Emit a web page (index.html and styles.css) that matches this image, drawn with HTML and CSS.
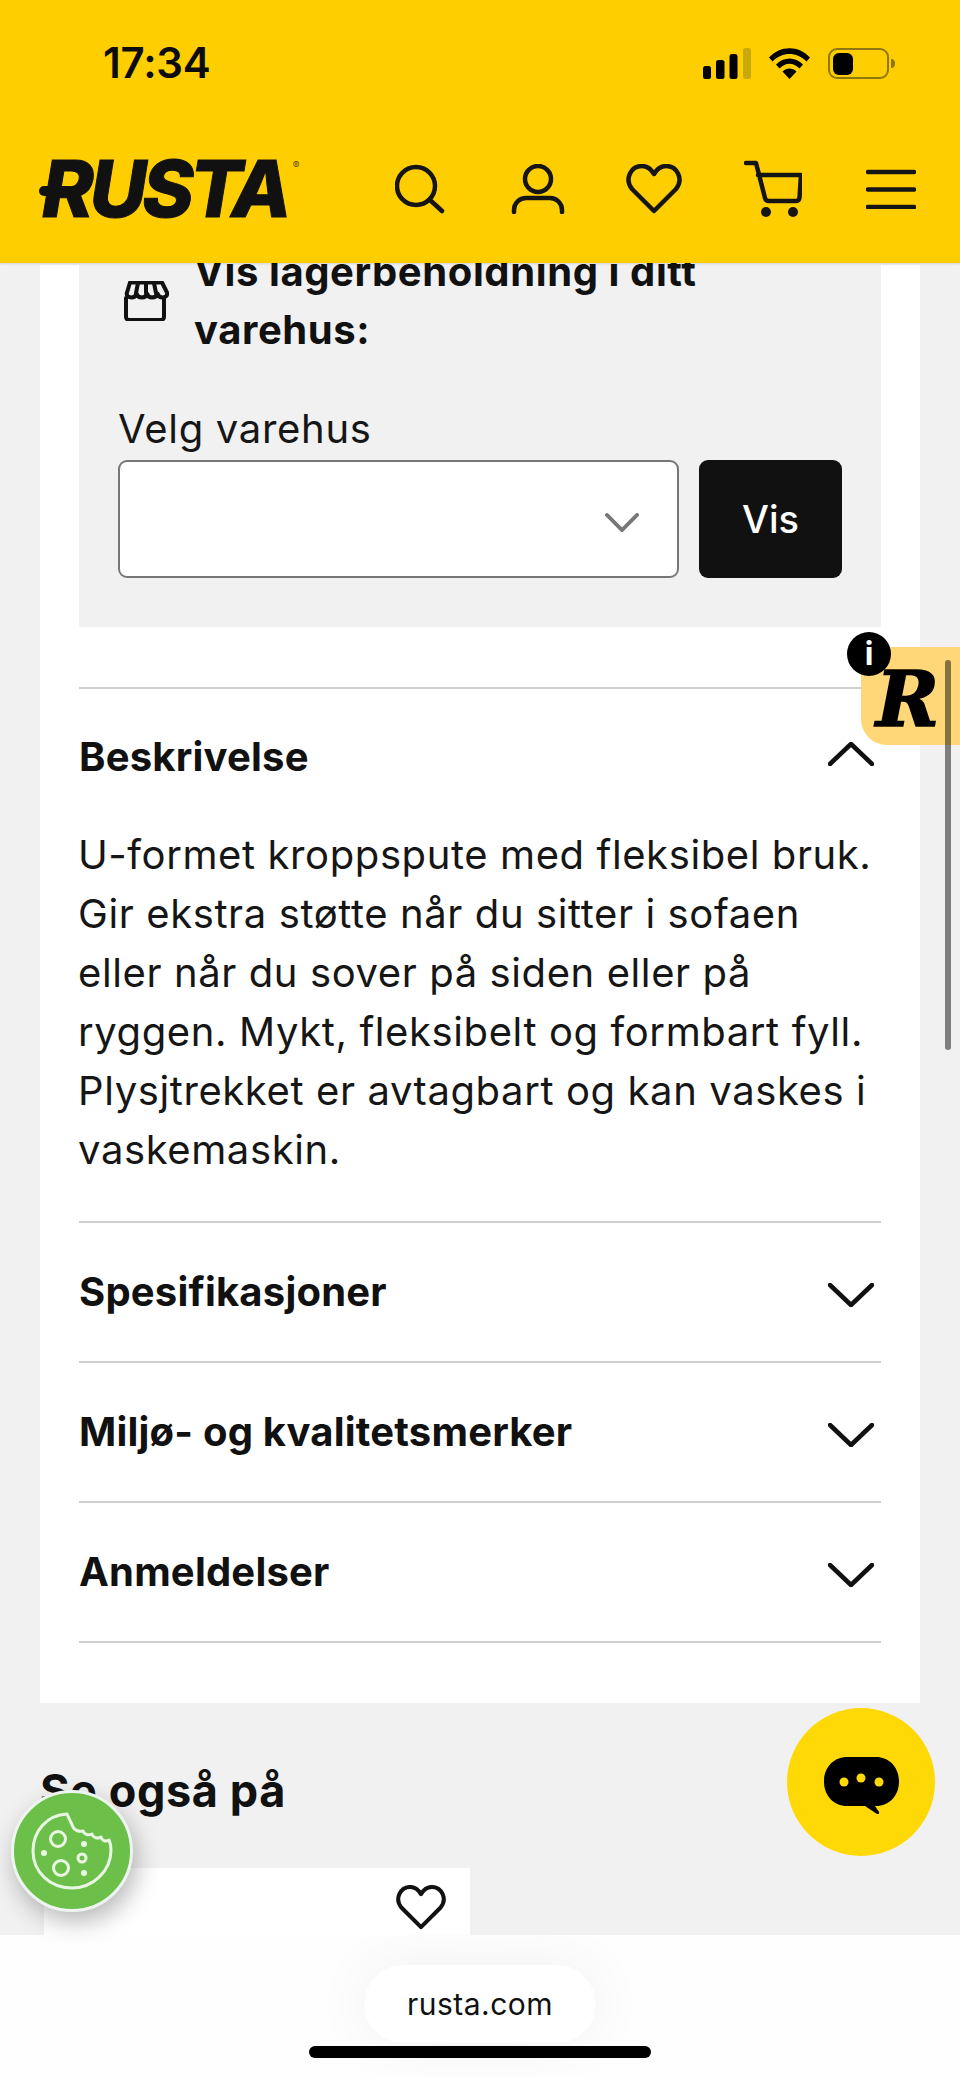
FILE: index.html
```html
<!DOCTYPE html>
<html lang="no">
<head>
<meta charset="utf-8">
<title>Rusta</title>
<link rel="stylesheet" href="styles.css">
</head>
<body>
<div class="page">
  <header class="header">
    <div class="status">
      <span class="time">17:34</span>
      <div class="status-icons">
        <svg class="sig" viewBox="0 0 48 31"><rect x="0" y="18" width="8" height="13" rx="2.5"/><rect x="13" y="12" width="8.5" height="19" rx="2.5"/><rect x="26.5" y="6" width="8" height="25" rx="2.5"/><rect class="dim" x="40" y="0" width="8" height="31" rx="2.5"/></svg>
        <svg class="wifi" viewBox="0 0 41 31"><path d="M0 9.5C11-3 30-3 41 9.5L37.5 13.500C28 3.500 13 3.500 3.500 13.500Z"/><path d="M7 16.500C14.500 8.500 26.500 8.500 34 16.500L30.500 20.500C24.500 14 16.500 14 10.500 20.500Z"/><path d="M13.500 23.500C17.500 19.500 23.500 19.500 27.500 23.500L20.500 31Z"/></svg>
        <svg class="batt" viewBox="0 0 67 31"><rect class="batt-frame" x="1" y="1" width="59" height="29" rx="8"/><rect x="5" y="5" width="20" height="22" rx="6"/><path class="batt-nub" d="M63 11c3 0 4 2 4 4.500s-1 4.500-4 4.500z"/></svg>
      </div>
    </div>
    <div class="nav">
      <a class="logo"><span class="logo-text">RUSTA</span><span class="logo-bar"></span><span class="reg">®</span></a>
      <div class="nav-icons">
        <svg class="ico i-search" viewBox="0 0 50 50"><circle cx="21" cy="22" r="19"/><path d="M35 36l12 11"/></svg>
        <svg class="ico i-user" viewBox="0 0 54 50"><circle cx="27" cy="15" r="13"/><path d="M3 48v-2a12 12 0 0 1 12-12h24a12 12 0 0 1 12 12v2"/></svg>
        <svg class="ico i-heart" viewBox="0 0 56 50"><path d="M28 47L6 25C-2 15 5 2 16 2c5 0 9 3 12 8 3-5 7-8 12-8 11 0 18 13 10 23z"/></svg>
        <svg class="ico i-cart" viewBox="0 0 58 58"><path d="M2 3h10l9 35c.5 2 2 3 4 3h27c2 0 3-1 3.500-3L57 15H14"/><circle class="fill" cx="22" cy="52" r="5"/><circle class="fill" cx="49" cy="52" r="5"/></svg>
        <svg class="ico i-menu" viewBox="0 0 50 40"><path d="M2 3h46M2 20.500h46M2 38h46"/></svg>
      </div>
    </div>
  </header>

  <main class="main">
    <section class="card">
      <div class="stock">
        <div class="stock-head">
          <svg class="store" viewBox="0 0 46 40"><path d="M3 17v19a3 3 0 0 0 3 3h32a3 3 0 0 0 3-3V17"/><path d="M7 1.500h32l5 10c.8 3-1.500 5-4.500 5-3 0-4.500-2-5-4-.5 2-2 4-5.500 4s-4.500-2-5-4c-.5 2-2 4-5 4s-5-2-5.500-4c-.5 2-2 4-5 4s-5.500-2-4.500-5z"/><path d="M15 2l-2 10M23 2v10M31 2l2 10"/></svg>
          <h2 class="stock-title">Vis lagerbeholdning i ditt varehus:</h2>
        </div>
        <label class="field-label">Velg varehus</label>
        <div class="field-row">
          <div class="select"><svg class="sel-chev" viewBox="0 0 36 20"><path d="M2 2l16 16L34 2"/></svg></div>
          <button class="btn">Vis</button>
        </div>
      </div>

      <div class="acc">
        <div class="acc-row acc-open"><h3 class="acc-title">Beskrivelse</h3><svg class="chev" viewBox="0 0 46 24"><path d="M2 22L23 2l21 20"/></svg></div>
        <p class="acc-body">U-formet kroppspute med fleksibel bruk.<br>Gir ekstra støtte når du sitter i sofaen<br>eller når du sover på siden eller på<br>ryggen. Mykt, fleksibelt og formbart fyll.<br>Plysjtrekket er avtagbart og kan vaskes i<br>vaskemaskin.</p>
        <div class="acc-row"><h3 class="acc-title">Spesifikasjoner</h3><svg class="chev" viewBox="0 0 46 24"><path d="M2 2l21 20L44 2"/></svg></div>
        <div class="acc-row"><h3 class="acc-title">Miljø- og kvalitetsmerker</h3><svg class="chev" viewBox="0 0 46 24"><path d="M2 2l21 20L44 2"/></svg></div>
        <div class="acc-row acc-last"><h3 class="acc-title">Anmeldelser</h3><svg class="chev" viewBox="0 0 46 24"><path d="M2 2l21 20L44 2"/></svg></div>
      </div>
    </section>

    <h2 class="also">Se også på</h2>
    <div class="product">
      <svg class="p-heart" viewBox="0 0 56 50"><path d="M28 47L6 25C-2 15 5 2 16 2c5 0 9 3 12 8 3-5 7-8 12-8 11 0 18 13 10 23z"/></svg>
    </div>
  </main>

  <footer class="bottom">
    <div class="pill">rusta.com</div>
    <div class="home"></div>
  </footer>

  <div class="r-badge"><span class="r-letter">R</span></div>
  <div class="i-badge">i</div>
  <div class="scroll"></div>

  <div class="chat">
    <svg class="chat-ico" viewBox="0 0 75 57"><path d="M23 0h29c13 0 23 10 23 24.500S65 49 52 49h-1l4 6c.5 1.500-.5 2.500-2 2L41 49H23C10 49 0 39 0 24.500S10 0 23 0z"/><circle class="dot" cx="20" cy="25" r="4.500"/><circle class="dot" cx="37" cy="21" r="4.500"/><circle class="dot" cx="55" cy="25" r="4.500"/></svg>
  </div>

  <div class="cookie">
    <svg class="cookie-ico" viewBox="0 0 82 78"><path d="M36 2c-20 1-34 17-34 37 0 21 17 37 39 37 21 0 39-17 39-38 0-4-.5-7-2-10-3 2-7 1-8-3-3 2-8 1-9-3-4 2-8 0-9-3-4 1-9-1-10-4-1-3-3-6-6-13z"/><circle cx="27" cy="27" r="7.500"/><circle cx="30" cy="56" r="7.500"/><circle cx="51" cy="46" r="4"/><circle class="cdot" cx="53" cy="32" r="3"/><circle class="cdot" cx="13" cy="41" r="3"/><circle class="cdot" cx="53" cy="61" r="3"/></svg>
  </div>
</div>
</body>
</html>
```
FILE: styles.css
```css
* { box-sizing: border-box; }
html, body { margin: 0; padding: 0; }
body { font-family: Inter, "Noto Sans", sans-serif; color: #111; background: #f1f1f1; }
.page { position: relative; width: 960px; height: 2078px; overflow: hidden; display: flex; flex-direction: column; }

/* header */
.header { height: 263px; background: #ffce00; flex: none; position: relative; z-index: 2; box-shadow: 0 1px 2px rgba(0,0,0,.12); }
.status { display: flex; justify-content: space-between; align-items: center; height: 102px; padding: 24px 65px 0 103px; }
.time { font-size: 42px; font-weight: 600; line-height: 48px; color: #0c0c0c; letter-spacing: -.2px; }
.status-icons { display: flex; align-items: center; gap: 18px; }
.sig { width: 48px; height: 31px; fill: #000; }
.sig .dim { fill: #c9a80a; }
.wifi { width: 41px; height: 31px; fill: #000; }
.batt { width: 67px; height: 31px; fill: #000; }
.batt-frame { fill: none; stroke: #8f7610; stroke-width: 2; }
.batt-nub { fill: #8f7610; }
.nav { display: flex; align-items: center; justify-content: space-between; padding: 49px 44px 0 40px; }
.logo { position: relative; display: flex; align-items: flex-start; height: 76px; color: #111; }
.logo-text { font-size: 78px; line-height: 76px; font-weight: 800; font-style: italic; letter-spacing: -4px; -webkit-text-stroke: 1px #111; margin-left: 2px; }
.logo-bar { position: absolute; left: -1px; top: 35px; width: 34px; height: 10px; border-radius: 5px; background: #111; }
.reg { font-size: 10px; line-height: 12px; margin-left: 5px; margin-top: 8px; color: #5b4a00; }
.nav-icons { display: flex; align-items: center; gap: 61px; }
.ico { fill: none; stroke: #151515; stroke-width: 4.500; stroke-linecap: round; stroke-linejoin: round; display: block; }
.ico .fill { fill: #151515; stroke: none; }
.i-search { width: 50px; height: 50px; margin-right: 5px; }
.i-user { width: 54px; height: 50px; }
.i-heart { width: 56px; height: 50px; margin-right: 1px; }
.i-cart { width: 58px; height: 58px; margin-right: 3px; }
.i-menu { width: 50px; height: 40px; }

/* main */
.main { flex: 1; min-height: 0; overflow: hidden; padding: 2px 40px 0; }
.card { background: #fff; padding: 0 39px 60px 39px; }
.stock { display: flow-root; background: #f1f1f1; height: 362px; padding: 0 38px 0 40px; }
.stock-head { display: flex; align-items: center; gap: 25px; margin-top: -22px; padding-left: 4px; }
.store { width: 46px; height: 40px; flex: none; fill: none; stroke: #111; stroke-width: 4; stroke-linejoin: round; stroke-linecap: round; }
.stock-title { margin: 0; width: 560px; font-size: 40px; line-height: 58px; font-weight: 700; letter-spacing: .6px; }
.field-label { display: block; margin-top: 46px; margin-left: -1px; font-size: 40px; line-height: 48px; font-weight: 400; color: #161616; letter-spacing: .7px; }
.field-row { display: flex; gap: 20px; margin-top: 7px; margin-left: -1px; }
.select { width: 561px; height: 118px; background: #fff; border: 2.500px solid #777; border-radius: 9px; display: flex; align-items: center; justify-content: flex-end; padding: 6px 38px 0 0; }
.sel-chev { width: 34px; height: 19px; fill: none; stroke: #777; stroke-width: 4; stroke-linecap: round; stroke-linejoin: round; }
.btn { width: 143px; height: 118px; border: 0; border-radius: 9px; background: #111; color: #fff; font: 500 38px Inter, sans-serif; }

/* accordion */
.acc { margin-top: 60px; }
.acc-row { height: 140px; border-top: 2px solid #cfcfcf; display: flex; align-items: center; justify-content: space-between; padding-right: 7px; }
.acc-open { height: 138px; }
.acc-row .chev { margin-top: 5px; }
.acc-open .chev { margin-top: 0; margin-bottom: 6px; }
.acc-last { height: 142px; border-bottom: 2px solid #cfcfcf; }
.acc-title { margin: 0; font-size: 40px; line-height: 46px; font-weight: 700; letter-spacing: .2px; }
.chev { width: 46px; height: 24px; fill: none; stroke: #111; stroke-width: 4.500; stroke-linecap: round; stroke-linejoin: round; }
.acc-body { margin: 0; margin-left: -1px; padding-bottom: 42px; font-size: 40px; line-height: 59px; font-weight: 400; color: #161616; letter-spacing: .6px; white-space: nowrap; }

.also { margin: 59px 0 48px; font-size: 45px; line-height: 58px; font-weight: 700; letter-spacing: .6px; }
.product { width: 426px; height: 140px; margin-left: 4px; background: #fff; display: flex; justify-content: flex-end; padding: 17px 24px 0 0; }
.p-heart { width: 50px; height: 45px; fill: none; stroke: #111; stroke-width: 4.500; stroke-linejoin: round; }

/* bottom */
.bottom { flex: none; height: 143px; background: #fefefe; position: relative; z-index: 2; overflow: hidden; display: flex; flex-direction: column; align-items: center; padding-top: 30px; }
.pill { width: 232px; height: 78px; border-radius: 39px; background: #fff; box-shadow: 0 0 60px rgba(0,0,0,.06); display: flex; align-items: center; justify-content: center; font-size: 30px; color: #111; letter-spacing: .5px; }
.home { width: 342px; height: 12px; margin-top: 3px; border-radius: 6px; background: #000; }

/* overlays */
.r-badge { position: absolute; left: 861px; top: 647px; width: 99px; height: 98px; background: #ffd678; border-radius: 0 0 0 26px; z-index: 3; display: flex; align-items: center; justify-content: center; }
.r-letter { font-family: "DejaVu Serif", serif; font-size: 76px; font-weight: 700; font-style: italic; line-height: 76px; color: #000; margin-left: -6px; margin-top: 8px; -webkit-text-stroke: 1.500px #000; }
.i-badge { position: absolute; left: 847px; top: 632px; width: 44px; height: 44px; border-radius: 50%; background: #000; color: #fff; font-size: 32px; font-weight: 700; line-height: 44px; text-align: center; z-index: 4; }
.scroll { position: absolute; left: 945px; top: 660px; width: 6px; height: 390px; border-radius: 3px; background: rgba(0,0,0,.48); z-index: 5; }
.chat { position: absolute; left: 787px; top: 1708px; width: 148px; height: 148px; border-radius: 50%; background: #ffd905; z-index: 3; display: flex; align-items: center; justify-content: center; }
.chat-ico { width: 75px; height: 57px; fill: #000; margin-top: 6px; }
.chat-ico .dot { fill: #ffd905; }
.cookie { position: absolute; left: 11px; top: 1790px; width: 122px; height: 122px; border-radius: 50%; background: #6cc04a; border: 3px solid #eef5f0; z-index: 3; box-shadow: 4px 10px 24px rgba(0,0,0,.28); display: flex; align-items: center; justify-content: center; }
.cookie-ico { width: 82px; height: 78px; fill: none; stroke: #eaf6e4; stroke-width: 3; stroke-linejoin: round; }
.cookie-ico .cdot { fill: #eaf6e4; stroke: none; }
```
